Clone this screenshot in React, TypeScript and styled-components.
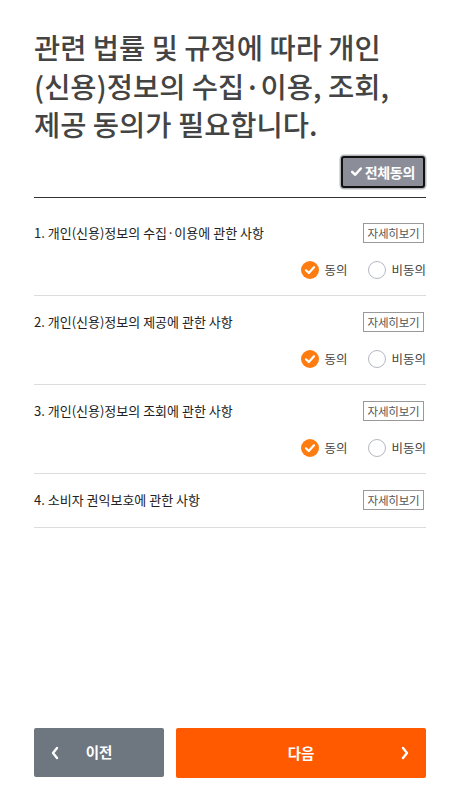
import React, { useState } from "react";
import styled, { createGlobalStyle } from "styled-components";

const Global = createGlobalStyle`
  html, body { margin: 0; padding: 0; background: #fff; }
  body { font-family: "Noto Sans CJK KR", "Noto Sans", sans-serif; color: #222; }
  * { box-sizing: border-box; }
`;

const Page = styled.div`
  min-height: 791px;
  display: flex;
  flex-direction: column;
  padding: 28px 28px 13px 34px;
`;

const Title = styled.h1`
  margin: 0;
  font-size: 28.5px;
  line-height: 38.5px;
  font-weight: 500;
  color: #444;
  letter-spacing: 0;
`;

const AllRow = styled.div`
  display: flex;
  justify-content: flex-end;
  padding: 12px 0 9px;
  border-bottom: 1px solid #333;
`;

const AllButton = styled.button`
  display: flex;
  align-items: center;
  gap: 2px;
  height: 32px;
  padding: 0 8px 0 7px;
  background: #8b8e99;
  border: 2px solid #111;
  border-radius: 3px;
  box-shadow: 0 0 0 1.5px #b5b7bd;
  color: #fff;
  font-family: inherit;
  font-size: 14px;
  font-weight: 700;
  letter-spacing: -0.3px;
  margin-right: 1px;
`;

const List = styled.div`
  padding-top: 9px;
`;

const Item = styled.div`
  padding: 16px 0;
  border-bottom: 1px solid #ddd;
  display: flex;
  flex-direction: column;
  gap: 17px;

  &:last-child {
    padding-bottom: 17px;
  }
`;

const ItemHead = styled.div`
  display: flex;
  align-items: center;
  justify-content: space-between;
  height: 20px;
`;

const ItemTitle = styled.span`
  font-size: 13px;
  color: #222;
  letter-spacing: 0;
`;

const DetailButton = styled.button`
  height: 20px;
  width: 61px;
  padding: 0;
  border: 1px solid #999;
  background: #fff;
  color: #555;
  font-family: inherit;
  font-size: 11.5px;
  letter-spacing: -0.2px;
  margin-right: 2px;
`;

const RadioRow = styled.div`
  display: flex;
  justify-content: flex-end;
  align-items: center;
  height: 20px;
  margin-bottom: -1px;
  gap: 21px;
`;

const RadioLabel = styled.label`
  display: flex;
  align-items: center;
  gap: 5px;
  font-size: 12.5px;
  color: #444;
  cursor: pointer;
`;

const Circle = styled.span<{ $on: boolean }>`
  width: 18px;
  height: 18px;
  border-radius: 50%;
  display: flex;
  align-items: center;
  justify-content: center;
  background: ${(p) => (p.$on ? "#ff7c10" : "#fff")};
  border: ${(p) => (p.$on ? "none" : "1px solid #b4b8c0")};
`;

const Spacer = styled.div`
  flex: 1;
`;

const Footer = styled.div`
  display: flex;
  gap: 12px;
`;

const NavButton = styled.button<{ $primary?: boolean }>`
  position: relative;
  height: ${(p) => (p.$primary ? "50px" : "49px")};
  width: ${(p) => (p.$primary ? "250px" : "130px")};
  border: none;
  border-radius: 2px;
  background: ${(p) => (p.$primary ? "#ff5a00" : "#6e7680")};
  color: #fff;
  font-family: inherit;
  font-size: 14.5px;
  font-weight: 700;
  display: flex;
  align-items: center;
  justify-content: center;
  padding: 0 0 2px;
`;

const Chevron = styled.svg<{ $side: "left" | "right" }>`
  position: absolute;
  top: 50%;
  margin-top: -7px;
  ${(p) => (p.$side === "left" ? "left: 16px;" : "right: 16px;")}
`;

const items = [
  "1. 개인(신용)정보의 수집·이용에 관한 사항",
  "2. 개인(신용)정보의 제공에 관한 사항",
  "3. 개인(신용)정보의 조회에 관한 사항",
  "4. 소비자 권익보호에 관한 사항",
];

function Check({ size = 12, stroke = "#fff", width = 2.2 }: { size?: number; stroke?: string; width?: number }) {
  return (
    <svg width={size} height={size} viewBox="0 0 12 12">
      <polyline points="2,6.3 4.8,9 10,3.2" fill="none" stroke={stroke} strokeWidth={width} strokeLinecap="round" strokeLinejoin="round" />
    </svg>
  );
}

export default function App() {
  const [agree, setAgree] = useState<boolean[]>([true, true, true]);
  return (
    <>
      <Global />
      <Page>
        <Title>
          관련 법률 및 규정에 따라 개인
          <br />
          (신용)정보의 수집·이용, 조회,
          <br />
          제공 동의가 필요합니다.
        </Title>
        <AllRow>
          <AllButton>
            <Check size={13} width={2.3} />
            전체동의
          </AllButton>
        </AllRow>
        <List>
          {items.map((t, i) => (
            <Item key={t}>
              <ItemHead>
                <ItemTitle>{t}</ItemTitle>
                <DetailButton>자세히보기</DetailButton>
              </ItemHead>
              {i < 3 && (
                <RadioRow>
                  <RadioLabel onClick={() => setAgree(agree.map((a, j) => (j === i ? true : a)))}>
                    <Circle $on={agree[i]}>{agree[i] && <Check size={12} />}</Circle>
                    동의
                  </RadioLabel>
                  <RadioLabel onClick={() => setAgree(agree.map((a, j) => (j === i ? false : a)))}>
                    <Circle $on={!agree[i]}>{!agree[i] && <Check size={12} />}</Circle>
                    비동의
                  </RadioLabel>
                </RadioRow>
              )}
            </Item>
          ))}
        </List>
        <Spacer />
        <Footer>
          <NavButton>
            <Chevron $side="left" width="10" height="14" viewBox="0 0 10 14">
              <polyline points="7,2 3,7 7,12" fill="none" stroke="#fff" strokeWidth="2.4" strokeLinecap="round" strokeLinejoin="round" />
            </Chevron>
            이전
          </NavButton>
          <NavButton $primary>
            다음
            <Chevron $side="right" width="10" height="14" viewBox="0 0 10 14">
              <polyline points="3,2 7,7 3,12" fill="none" stroke="#fff" strokeWidth="2.4" strokeLinecap="round" strokeLinejoin="round" />
            </Chevron>
          </NavButton>
        </Footer>
      </Page>
    </>
  );
}
